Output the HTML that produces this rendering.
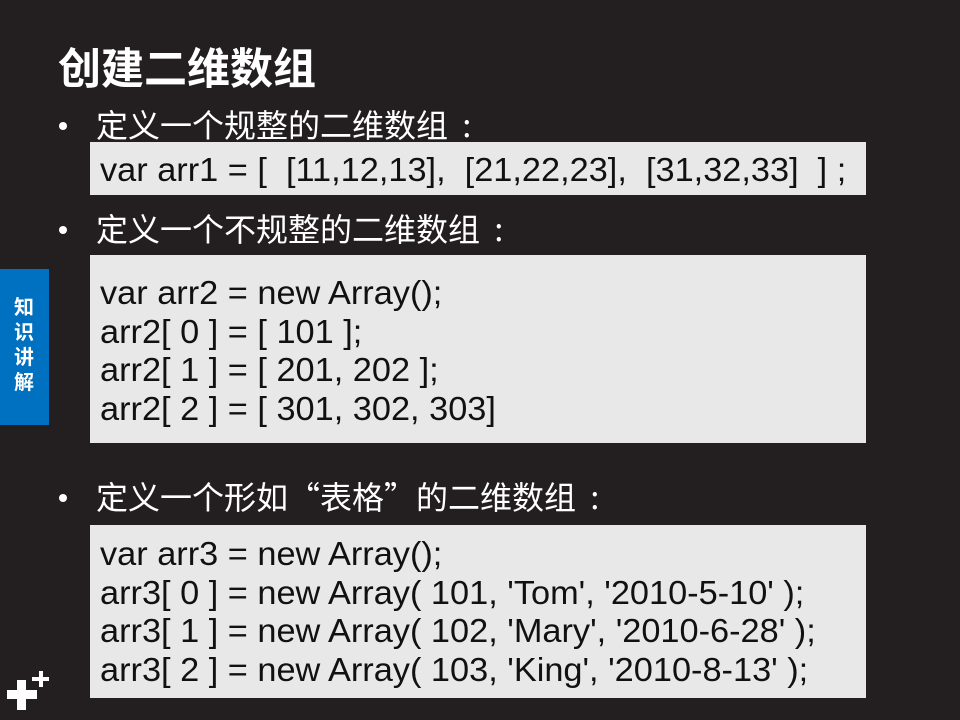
<!DOCTYPE html>
<html><head><meta charset="utf-8"><style>
body{margin:0;width:960px;height:720px;background:#231f20;overflow:hidden;position:relative;font-family:"Liberation Sans","Noto Sans CJK SC",sans-serif;}
.t{position:absolute;white-space:nowrap;z-index:2;}
.box{position:absolute;left:90px;width:776px;background:#e8e8e8;}
.code{position:absolute;left:100px;color:#111;font-size:33px;white-space:nowrap;transform-origin:left top;transform:scaleX(1.04);}
.h{color:#fff;font-size:32px;line-height:40px;font-family:"Noto Sans CJK SC",sans-serif;}
.b{position:absolute;left:59px;width:8px;height:8px;border-radius:50%;background:#fff;}
</style></head><body>
<div class="t" style="left:58px;top:36px;color:#fff;font-size:43px;font-weight:bold;font-family:'Noto Sans CJK SC',sans-serif;line-height:60px;">创建二维数组</div>
<div class="b" style="top:122px"></div>
<div class="t h" style="left:96px;top:104px;">定义一个规整的二维数组&nbsp; :</div>
<div class="box" style="top:142px;height:53px;"></div>
<div class="code" style="top:151px;">var arr1 = [&nbsp; [11,12,13],&nbsp; [21,22,23],&nbsp; [31,32,33]&nbsp; ] ;</div>
<div class="b" style="top:226px"></div>
<div class="t h" style="left:96px;top:208px;">定义一个不规整的二维数组&nbsp; :</div>
<div class="box" style="top:255px;height:188px;"></div>
<div class="code" style="top:274px;line-height:38.5px;">var arr2 = new Array();<br>arr2[ 0 ] = [ 101 ];<br>arr2[ 1 ] = [ 201, 202 ];<br>arr2[ 2 ] = [ 301, 302, 303]</div>
<div class="b" style="top:494px"></div>
<div class="t h" style="left:96px;top:476px;">定义一个形如“表格”的二维数组&nbsp; :</div>
<div class="box" style="top:525px;height:173px;"></div>
<div class="code" style="top:535px;line-height:38.5px;">var arr3 = new Array();<br>arr3[ 0 ] = new Array( 101, 'Tom', '2010-5-10' );<br>arr3[ 1 ] = new Array( 102, 'Mary', '2010-6-28' );<br>arr3[ 2 ] = new Array( 103, 'King', '2010-8-13' );</div>
<div style="position:absolute;left:0;top:269px;width:49px;height:156px;background:#0070c0;"></div>
<div class="t" style="left:14px;top:296px;width:22px;color:#fff;font-size:20px;font-weight:bold;line-height:25px;white-space:normal;">知识讲解</div>
<div style="position:absolute;left:7px;top:690px;width:30px;height:9px;background:#fff"></div>
<div style="position:absolute;left:17px;top:680px;width:9px;height:30px;background:#fff"></div>
<div style="position:absolute;left:32px;top:677px;width:17px;height:4px;background:#fff"></div>
<div style="position:absolute;left:39px;top:671px;width:4px;height:16px;background:#fff"></div>
</body></html>
